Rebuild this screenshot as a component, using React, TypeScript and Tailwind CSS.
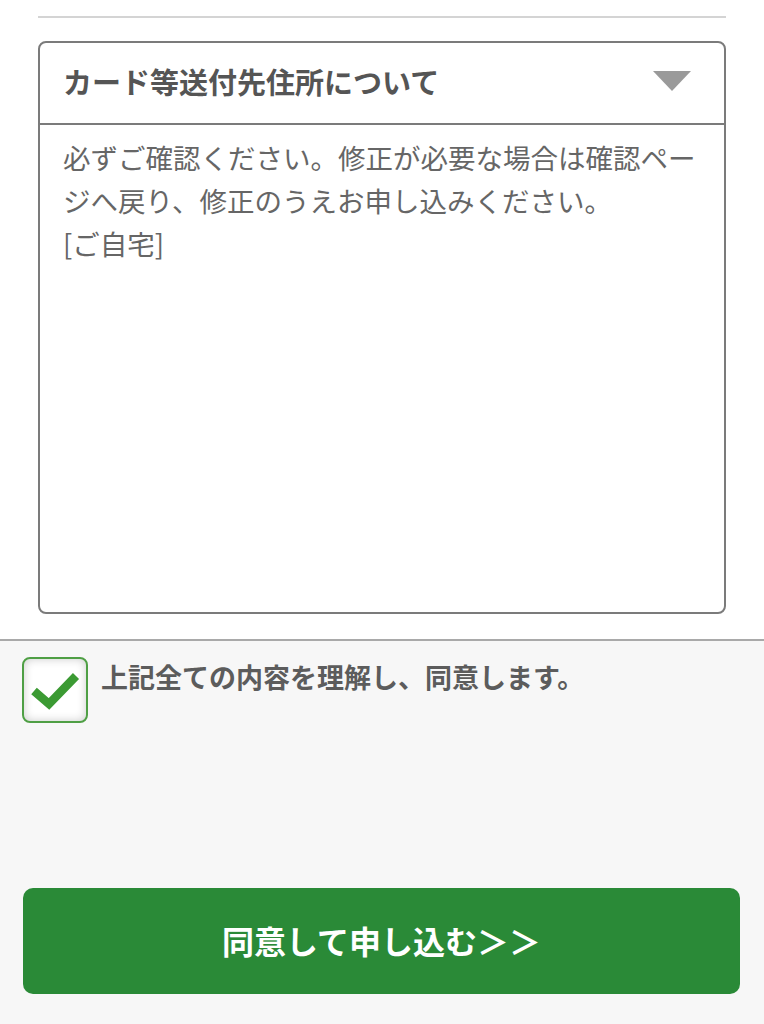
export default function App() {
  return (
    <main
      className="flex min-h-screen w-full flex-col bg-white"
      style={{ fontFamily: '"Noto Sans CJK JP", "Noto Sans", sans-serif' }}
    >
      {/* 上部: 住所確認ボックス */}
      <section className="px-[38px] pt-[16px] pb-[25px]">
        <div className="h-[2px] bg-[#d4d4d4]" />
        <div className="mt-[23px] flex h-[573px] flex-col rounded-[8px] border-2 border-[#7b7b7b]">
          <div className="flex h-[82px] shrink-0 items-center justify-between border-b-2 border-[#7b7b7b] pb-[4px] pl-[23px] pr-[33px]">
            <h2 className="text-[29px] font-bold leading-none text-[#555555]">
              カード等送付先住所について
            </h2>
            <svg width="38" height="20" viewBox="0 0 38 20">
              <polygon points="0,0 38,0 19,20" fill="#9a9a9a" />
            </svg>
          </div>
          <div className="pl-[23px] pr-[22px] pt-[11px] text-[27.5px] leading-[43px] text-[#666666]">
            <p>必ずご確認ください。修正が必要な場合は確認ページへ戻り、修正のうえお申し込みください。</p>
            <p>[ご自宅]</p>
          </div>
        </div>
      </section>

      {/* 下部: 同意エリア */}
      <section className="flex flex-1 flex-col border-t-2 border-[#a9a9a9] bg-[#f7f7f7] pt-[16px]">
        <label className="flex items-start gap-[13px] pl-[22px]">
          <span className="flex h-[66px] w-[66px] shrink-0 items-center justify-center rounded-[8px] border-2 border-[#4f9f45] bg-white shadow-[inset_0_0_10px_rgba(0,0,0,0.2)]">
            <svg width="52" height="42" viewBox="0 0 52 42">
              <path
                d="M5 22 L20 35 L47 7"
                fill="none"
                stroke="#3b9a33"
                strokeWidth="8.5"
                strokeLinejoin="miter"
              />
            </svg>
          </span>
          <span className="text-[27px] font-bold leading-[40px] text-[#5c5c5c]">
            上記全ての内容を理解し、同意します。
          </span>
        </label>

        <div className="mt-[165px] pl-[23px] pr-[24px]">
          <button className="flex h-[106px] w-full items-center justify-center rounded-[10px] bg-[#2a8a37] pb-[2px] text-[32px] font-bold text-white">
            同意して申し込む＞＞
          </button>
        </div>
      </section>
    </main>
  );
}
